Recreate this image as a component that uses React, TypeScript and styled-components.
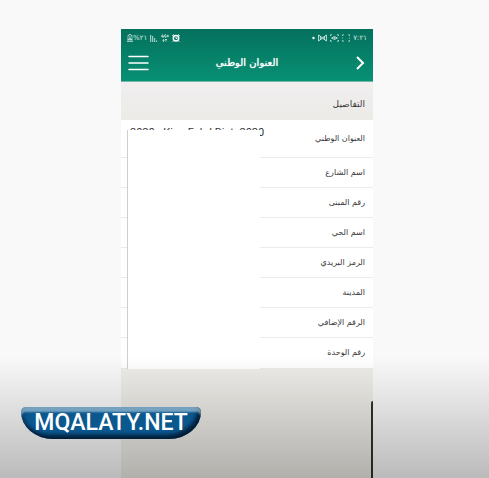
import React from "react";
import styled, { createGlobalStyle } from "styled-components";

const GlobalStyle = createGlobalStyle`
  *, *::before, *::after { box-sizing: border-box; }
  body { margin: 0; background: #f9f9f9; font-family: "DejaVu Sans", "Noto Sans", sans-serif; }
`;

const Page = styled.div`
  position: relative;
  display: grid;
  grid-template-columns: 121fr 252fr 116fr;
  min-height: 100vh;
  padding-top: 29px;
  overflow: hidden;
`;

const Shade = styled.div`
  position: absolute;
  inset: auto 0 0;
  height: 122px;
  background: linear-gradient(rgba(0, 0, 0, 0), rgba(0, 0, 0, 0.25));
  pointer-events: none;
`;

const Phone = styled.main`
  grid-column: 2;
  display: flex;
  flex-direction: column;
  background: #efede9;
  color: #38383a;
`;

const TopArea = styled.header`
  height: 53px;
  background: linear-gradient(#04705d, #089174);
  border-bottom: 1px solid #74b5a6;
  color: #fff;
`;

const StatusBar = styled.div`
  display: flex;
  justify-content: space-between;
  height: 18px;
  padding: 0 6px;
  font-size: 7px;
  line-height: 18px;
  color: #d5ebe5;
`;

const StatusGroup = styled.div<{ $gap: number }>`
  display: flex;
  align-items: center;
  gap: ${(p) => p.$gap}px;
`;

const NavBar = styled.div`
  display: grid;
  grid-template-columns: 1fr auto 1fr;
  align-items: center;
  height: 32px;
  padding: 0 7px;
`;

const IconButton = styled.button<{ $side: "start" | "end" }>`
  display: flex;
  justify-self: ${(p) => p.$side};
  padding: 0;
  border: 0;
  background: none;
  color: inherit;
`;

const Title = styled.h1`
  margin: 0;
  font-size: 10px;
  font-weight: 400;
  line-height: 16px;
  text-shadow: 0 0 1px #fff;
`;

const SectionTitle = styled.h2`
  margin: 0;
  height: 38px;
  padding: 6px 8px 0;
  font-size: 9px;
  font-weight: 400;
  line-height: 32px;
  background: linear-gradient(#f0eeef, #edebe7);
`;

const Details = styled.section`
  position: relative;
  background: #fff;
`;

const Table = styled.table`
  width: 100%;
  border-collapse: collapse;
  table-layout: fixed;
`;

const Row = styled.tr`
  height: 30px;
  border-bottom: 1px solid #ebebeb;

  &:first-child { height: 37px; }
  &:last-child { height: 31px; }
`;

const Label = styled.th`
  width: 45%;
  padding: 1px 8px 0 0;
  text-align: right;
  font-size: 8px;
  font-weight: 400;
  line-height: 16px;
`;

const Value = styled.td`
  padding: 5px 0 0 9px;
  text-align: left;
  vertical-align: top;
  font-family: Roboto, sans-serif;
  font-size: 11px;
  line-height: 16px;
  white-space: nowrap;
`;

const Cover = styled.div`
  position: absolute;
  inset: 10px 45% 0 6px;
  border-left: 1px solid #cfcfcf;
  background: #fff;
`;

const Footer = styled.div`
  display: flex;
  flex: 1;
  justify-content: flex-end;
  padding-top: 32px;
  background: linear-gradient(#efede9, #edebe5);
`;

const Edge = styled.div`
  width: 2px;
  border-top-left-radius: 2px;
  background: #30322f;
`;

const Badge = styled.a`
  position: absolute;
  left: 21px;
  bottom: 39px;
  width: 180px;
  height: 32px;
  border-radius: 5px 5px 32px 32px / 5px 5px 27px 27px;
  background: #0b588f;
  box-shadow:
    inset 0 5px 2px rgba(190, 215, 230, 0.6),
    inset -3px -4px 4px rgba(0, 18, 38, 0.85),
    inset 3px 0 4px rgba(0, 18, 38, 0.3);
  color: #fff;
  font: 500 23px/32px Roboto, sans-serif;
  text-align: center;
  text-decoration: none;
`;

const BatteryIcon = () => (
  <svg width="6" height="8" viewBox="0 0 6 8" fill="none" stroke="currentColor" strokeWidth=".7">
    <path d="M2 .5h2v1H5v4H1v-4h1zM0 6h6M0 7.5h6M2 3h2M2 4.5h2" />
  </svg>
);

const SignalIcon = () => (
  <svg width="8" height="8" viewBox="0 0 8 8" stroke="currentColor" strokeWidth=".9">
    <path d="M.7 1v7M2.7 2v6M4.7 4v4M6.7 6.5V8" />
  </svg>
);

const DataIcon = () => (
  <svg width="8" height="8" viewBox="0 0 8 8" fill="none" stroke="currentColor" strokeWidth=".8">
    <path d="M1.5.5.5 2.5h2M2 1v3M5 .8H3.8v2.4H5V2M5.5 2H8M6.8.8v2.4M2.5 5v2.5M1.5 6.5l1 1 1-1M5 7.5V5M4 6l1-1 1 1" />
  </svg>
);

const AlarmIcon = () => (
  <svg width="8" height="8" viewBox="0 0 8 8" fill="none" stroke="#fff">
    <circle cx="4" cy="4.3" r="2.7" strokeWidth="1.5" />
    <path d="M.3 1.8 2 .5M7.7 1.8 6 .5M1.8 6.4.8 7.7M6.2 6.4l1 1.3M4 2.8v1.6h1.3" />
  </svg>
);

const DotIcon = () => (
  <svg width="3" height="8" viewBox="0 0 3 8">
    <circle cx="1.5" cy="4" r="1.2" fill="#fff" />
  </svg>
);

const BowIcon = () => (
  <svg width="9" height="8" viewBox="0 0 9 8" fill="none" stroke="currentColor" strokeWidth=".9">
    <path d="M.6 1v6l7.8-6v6L.6 1M2.7 2v4M6.3 2v4" />
  </svg>
);

const EyeIcon = () => (
  <svg width="9" height="8" viewBox="0 0 9 8" fill="none" stroke="currentColor" strokeWidth=".8">
    <path d="M.5 2V.8H2M7 .8h1.5V2M.5 6v1.2H2M7 7.2h1.5V6M1.5 4q3-3 6 0-3 3-6 0z" />
    <circle cx="4.5" cy="4" r=".7" />
  </svg>
);

const FrameIcon = () => (
  <svg width="8" height="8" viewBox="0 0 8 8" fill="none" stroke="currentColor" strokeWidth=".7">
    <path d="M.5 2V.8H2M6 .8h1.5V2M.5 6v1.2H2M6 7.2h1.5V6M.5 3.5v1M7.5 3.5v1" />
  </svg>
);

const MenuIcon = () => (
  <svg width="21" height="16" viewBox="0 0 21 16" stroke="currentColor" strokeWidth="1.5" strokeLinecap="round">
    <path d="M1 1.5h19M1 8h19M1 14.5h19" />
  </svg>
);

const ChevronIcon = () => (
  <svg width="10" height="14" viewBox="0 0 10 14" fill="none" stroke="currentColor" strokeWidth="2">
    <path d="m1 1 6 6-6 6" />
  </svg>
);

const rows = [
  { label: "العنوان الوطني", value: "2020 - King Fahd Dist. 2020" },
  { label: "اسم الشارع" },
  { label: "رقم المبنى" },
  { label: "اسم الحي" },
  { label: "الرمز البريدي" },
  { label: "المدينة" },
  { label: "الرقم الإضافي" },
  { label: "رقم الوحدة" },
];

export default function App() {
  return (
    <Page>
      <GlobalStyle />
      <Phone lang="ar">
        <TopArea>
          <StatusBar>
            <StatusGroup $gap={3}>
              <StatusGroup $gap={0}>
                <BatteryIcon />
                <span>%</span>
                <span>٢١</span>
              </StatusGroup>
              <SignalIcon />
              <DataIcon />
              <AlarmIcon />
            </StatusGroup>
            <StatusGroup $gap={3}>
              <DotIcon />
              <BowIcon />
              <EyeIcon />
              <FrameIcon />
              <span>٧:٢١</span>
            </StatusGroup>
          </StatusBar>
          <NavBar>
            <IconButton type="button" $side="start" aria-label="القائمة">
              <MenuIcon />
            </IconButton>
            <Title dir="rtl">العنوان الوطني</Title>
            <IconButton type="button" $side="end" aria-label="رجوع">
              <ChevronIcon />
            </IconButton>
          </NavBar>
        </TopArea>
        <SectionTitle dir="rtl">التفاصيل</SectionTitle>
        <Details>
          <Table dir="rtl">
            <tbody>
              {rows.map((row) => (
                <Row key={row.label}>
                  <Label scope="row">{row.label}</Label>
                  <Value dir="ltr">{row.value}</Value>
                </Row>
              ))}
            </tbody>
          </Table>
          <Cover />
        </Details>
        <Footer>
          <Edge />
        </Footer>
      </Phone>
      <Shade />
      <Badge href="#">MQALATY.NET</Badge>
    </Page>
  );
}
